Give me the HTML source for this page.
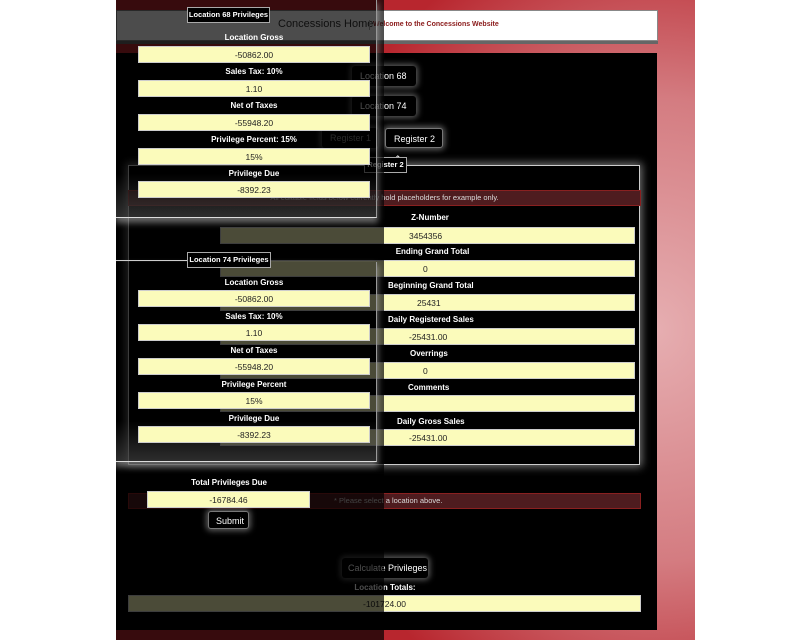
<!DOCTYPE html>
<html><head><meta charset="utf-8"><style>
*{margin:0;padding:0;box-sizing:border-box}
body{width:800px;height:640px;background:#fff;position:relative;overflow:hidden;font-family:"Liberation Sans",Arial,sans-serif}
.a{position:absolute}
.page{left:116px;top:0;width:579px;height:640px;background:radial-gradient(ellipse 360px 420px at 540px 330px,#e6aeb1 0%,#d47c81 55%,#b8262e 100%)}
.hdr{left:116px;top:10px;width:542px;height:31px;background:#fff;border:1px solid #888;box-shadow:0 3px 0 #666}
.blk{left:116px;top:53px;width:541px;height:577px;background:#000}
.lbl{position:absolute;color:#fff;font-weight:bold;font-size:8px;text-align:center}
.in{position:absolute;background:#fbfbbb;border:1px solid #ccc;font-size:8.5px;color:#222;height:17px;line-height:16px}
.c{text-align:center}
.sel{position:absolute;background:#000;color:#fff;font-size:9px;border-radius:3px;box-shadow:0 0 6px 2px rgba(255,255,255,.35);height:20px;line-height:20px;padding-left:8px}
.ov{left:116px;top:0;width:268px;height:640px;background:rgba(0,0,0,.7)}
.panel{position:absolute;left:116px;width:261px;background:linear-gradient(to bottom,rgba(0,0,0,0) 0%,rgba(0,0,0,0) 80%,rgba(90,90,90,.5) 100%);box-shadow:0 4px 6px 1px rgba(255,255,255,.4);border-right:1px solid #999;border-bottom:1px solid #ddd}
.leg{position:absolute;background:#000;border:1px solid #aaa;color:#fff;font-weight:bold;font-size:7.5px;height:16px;line-height:14px;text-align:center}
.red{position:absolute;background:#4e1c1f;border:1px solid #8a2020;color:#ddd;font-size:7.5px;height:16px;line-height:14px}
</style></head><body>
<div class="a page"></div>
<div class="a hdr"></div>
<div class="a" style="left:278px;top:18px;font-size:11px;color:#333">Concessions Home</div>
<div class="a" style="left:369px;top:20px;width:1px;height:10px;background:#aaa"></div>
<div class="a" style="left:373px;top:21px;font-size:7px;color:#8a1a1a;font-weight:bold">Welcome to the Concessions Website</div>
<div class="a blk"></div>

<div class="sel" style="left:352px;top:66px;width:64px">Location 68 ⇕</div>
<div class="sel" style="left:352px;top:96px;width:64px">Location 74 ⇕</div>
<div class="sel" style="left:322px;top:128px;width:56px;color:#888">Register 1 ⇕</div>
<div class="sel" style="left:385px;top:128px;width:58px;border:1px solid #777">Register 2 ⇕</div>

<div class="a" style="left:128px;top:165px;width:512px;height:300px;border:1px solid #ccc;box-shadow:0 0 8px 2px rgba(255,255,255,.45)"></div>
<div class="leg" style="left:364px;top:157px;width:43px">Register 2</div>
<div class="red" style="left:128px;top:190px;width:513px;text-align:center">All editable fields below currently hold placeholders for example only.</div>

<div class="lbl" style="left:385px;top:213px;width:90px">Z-Number</div>
<div class="in" style="left:220px;top:227px;width:415px;padding-left:188px">3454356</div>
<div class="lbl" style="left:385px;top:247px;width:95px">Ending Grand Total</div>
<div class="in" style="left:220px;top:260px;width:415px;padding-left:202px">0</div>
<div class="lbl" style="left:388px;top:281px;width:100px;text-align:left">Beginning Grand Total</div>
<div class="in" style="left:220px;top:294px;width:415px;padding-left:196px">25431</div>
<div class="lbl" style="left:388px;top:315px;width:110px;text-align:left">Daily Registered Sales</div>
<div class="in" style="left:220px;top:328px;width:415px;padding-left:188px">-25431.00</div>
<div class="lbl" style="left:410px;top:349px;width:60px;text-align:left">Overrings</div>
<div class="in" style="left:220px;top:362px;width:415px;padding-left:202px">0</div>
<div class="lbl" style="left:408px;top:383px;width:60px;text-align:left">Comments</div>
<div class="in" style="left:220px;top:395px;width:415px"></div>
<div class="lbl" style="left:397px;top:417px;width:80px;text-align:left">Daily Gross Sales</div>
<div class="in" style="left:220px;top:429px;width:415px;padding-left:188px">-25431.00</div>

<div class="red" style="left:128px;top:493px;width:513px;padding-left:205px">* Please select a location above.</div>
<div class="sel" style="left:342px;top:558px;width:86px;padding-left:6px">Calculate Privileges</div>
<div class="lbl" style="left:335px;top:583px;width:100px">Location Totals:</div>
<div class="in c" style="left:128px;top:595px;width:513px">-101724.00</div>

<div class="a ov"></div>

<div class="panel" style="top:0;height:218px"></div>
<div class="leg" style="left:187px;top:7px;width:83px">Location 68 Privileges</div>
<div class="lbl" style="left:138px;top:33px;width:232px">Location Gross</div>
<div class="in c" style="left:138px;top:46px;width:232px">-50862.00</div>
<div class="lbl" style="left:138px;top:67px;width:232px">Sales Tax: 10%</div>
<div class="in c" style="left:138px;top:80px;width:232px">1.10</div>
<div class="lbl" style="left:138px;top:101px;width:232px">Net of Taxes</div>
<div class="in c" style="left:138px;top:114px;width:232px">-55948.20</div>
<div class="lbl" style="left:138px;top:135px;width:232px">Privilege Percent: 15%</div>
<div class="in c" style="left:138px;top:148px;width:232px">15%</div>
<div class="lbl" style="left:138px;top:169px;width:232px">Privilege Due</div>
<div class="in c" style="left:138px;top:181px;width:232px">-8392.23</div>

<div class="a" style="left:116px;top:260px;width:71px;height:1px;background:#ccc"></div>
<div class="panel" style="top:262px;height:200px"></div>
<div class="leg" style="left:187px;top:252px;width:84px">Location 74 Privileges</div>
<div class="lbl" style="left:138px;top:278px;width:232px">Location Gross</div>
<div class="in c" style="left:138px;top:290px;width:232px">-50862.00</div>
<div class="lbl" style="left:138px;top:312px;width:232px">Sales Tax: 10%</div>
<div class="in c" style="left:138px;top:324px;width:232px">1.10</div>
<div class="lbl" style="left:138px;top:346px;width:232px">Net of Taxes</div>
<div class="in c" style="left:138px;top:358px;width:232px">-55948.20</div>
<div class="lbl" style="left:138px;top:380px;width:232px">Privilege Percent</div>
<div class="in c" style="left:138px;top:392px;width:232px">15%</div>
<div class="lbl" style="left:138px;top:414px;width:232px">Privilege Due</div>
<div class="in c" style="left:138px;top:426px;width:232px">-8392.23</div>

<div class="lbl" style="left:170px;top:478px;width:118px">Total Privileges Due</div>
<div class="in c" style="left:147px;top:491px;width:163px">-16784.46</div>
<div class="sel" style="left:208px;top:511px;width:41px;height:18px;line-height:18px;padding-left:7px;border:1px solid #777">Submit</div>
</body></html>
